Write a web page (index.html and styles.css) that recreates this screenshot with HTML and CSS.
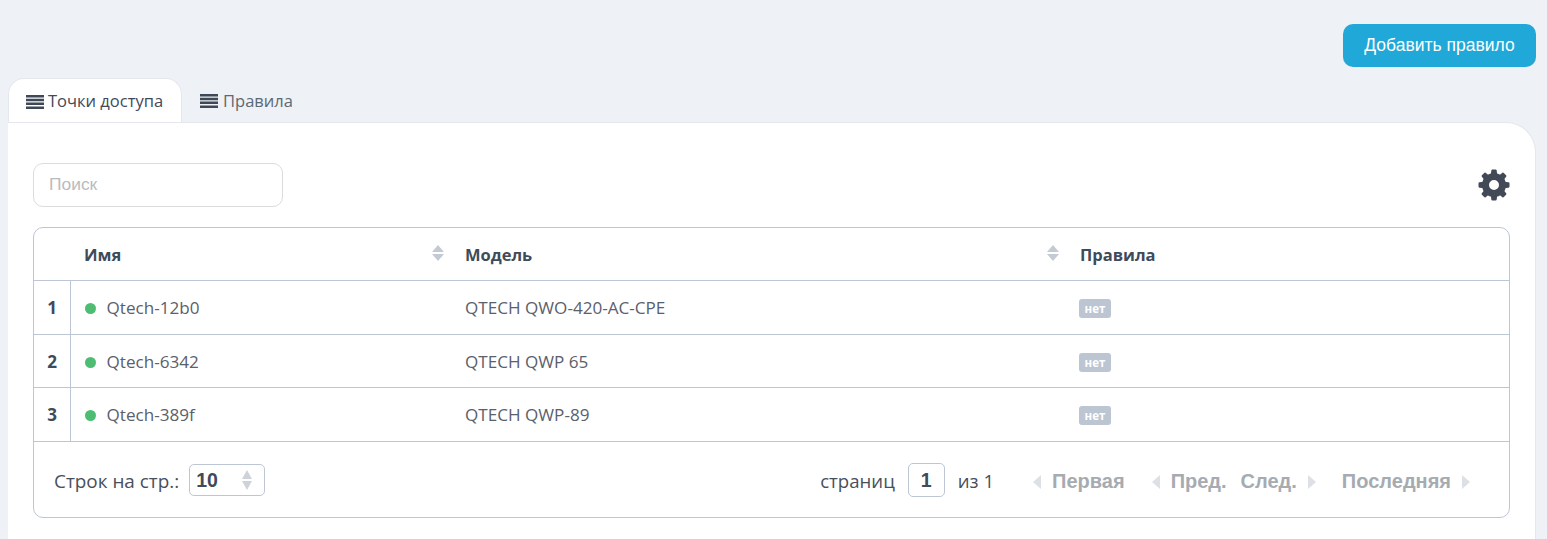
FILE: index.html
```html
<!DOCTYPE html>
<html lang="ru">
<head>
<meta charset="utf-8">
<title>Правила</title>
<link rel="stylesheet" href="styles.css">
</head>
<body>
<div class="toolbar"><button class="add-btn">Добавить правило</button></div>
<div class="tabs">
  <div class="tab active"><svg class="bars" viewBox="0 0 18 14"><path d="M0 0h18v2.5H0zM0 3.8h18v2.5H0zM0 7.6h18v2.5H0zM0 11.4h18V14H0z"/></svg>Точки доступа</div>
  <div class="tab"><svg class="bars" viewBox="0 0 18 14"><path d="M0 0h18v2.5H0zM0 3.8h18v2.5H0zM0 7.6h18v2.5H0zM0 11.4h18V14H0z"/></svg>Правила</div>
</div>
<main class="panel">
  <div class="filter-row">
    <input class="search" type="text" placeholder="Поиск">
    <svg class="gear" viewBox="0 0 32 32">
      <circle class="gear-ring" cx="16" cy="16" r="8.5"/>
      <g class="gear-teeth">
        <path d="M12.8 6 13.3 1.5Q13.4.5 14.4.5h3.2q1 0 1.1 1L19.2 6z"/>
        <path d="M12.8 6 13.3 1.5Q13.4.5 14.4.5h3.2q1 0 1.1 1L19.2 6z" transform="rotate(45 16 16)"/>
        <path d="M12.8 6 13.3 1.5Q13.4.5 14.4.5h3.2q1 0 1.1 1L19.2 6z" transform="rotate(90 16 16)"/>
        <path d="M12.8 6 13.3 1.5Q13.4.5 14.4.5h3.2q1 0 1.1 1L19.2 6z" transform="rotate(135 16 16)"/>
        <path d="M12.8 6 13.3 1.5Q13.4.5 14.4.5h3.2q1 0 1.1 1L19.2 6z" transform="rotate(180 16 16)"/>
        <path d="M12.8 6 13.3 1.5Q13.4.5 14.4.5h3.2q1 0 1.1 1L19.2 6z" transform="rotate(225 16 16)"/>
        <path d="M12.8 6 13.3 1.5Q13.4.5 14.4.5h3.2q1 0 1.1 1L19.2 6z" transform="rotate(270 16 16)"/>
        <path d="M12.8 6 13.3 1.5Q13.4.5 14.4.5h3.2q1 0 1.1 1L19.2 6z" transform="rotate(315 16 16)"/>
      </g>
    </svg>
  </div>
  <div class="table-box">
    <table class="grid">
      <thead>
        <tr>
          <th class="col-idx"></th>
          <th class="col-name"><span class="th-label">Имя</span><span class="sort"><i class="up"></i><i class="down"></i></span></th>
          <th class="col-model"><span class="th-label">Модель</span><span class="sort"><i class="up"></i><i class="down"></i></span></th>
          <th class="col-rules"><span class="th-label">Правила</span></th>
        </tr>
      </thead>
      <tbody>
        <tr><td class="idx">1</td><td><span class="dot"></span>Qtech-12b0</td><td>QTECH QWO-420-AC-CPE</td><td><span class="badge">нет</span></td></tr>
        <tr><td class="idx">2</td><td><span class="dot"></span>Qtech-6342</td><td>QTECH QWP 65</td><td><span class="badge">нет</span></td></tr>
        <tr><td class="idx">3</td><td><span class="dot"></span>Qtech-389f</td><td>QTECH QWP-89</td><td><span class="badge">нет</span></td></tr>
      </tbody>
    </table>
    <div class="pager">
      <div class="per-page">
        <span class="pager-label">Строк на стр.:</span>
        <div class="select"><b>10</b><span class="sort small"><i class="up"></i><i class="down"></i></span></div>
      </div>
      <div class="pages">
        <span class="pager-label">страниц</span>
        <div class="page-input">1</div>
        <span class="pager-label">из 1</span>
        <span class="nav nav-first"><i class="left"></i>Первая</span>
        <span class="nav nav-prev"><i class="left"></i>Пред.</span>
        <span class="nav nav-next">След.<i class="right"></i></span>
        <span class="nav nav-last">Последняя<i class="right"></i></span>
      </div>
    </div>
  </div>
</main>
</body>
</html>
```

FILE: styles.css
```css
* { box-sizing: border-box; }
html, body { height: 100%; }
body {
  margin: 0;
  height: 539px;
  overflow: hidden;
  padding: 24px 11px 0 8px;
  background: #eef1f6;
  color: #484f5c;
  font: 17.1px/1.5 "Open Sans", sans-serif;
}
.toolbar { display: flex; justify-content: flex-end; height: 54px; }
.add-btn {
  width: 193px;
  height: 43px;
  border: 0;
  border-radius: 10px;
  background: #20a8d8;
  color: #fff;
  font: 17.5px "Liberation Sans", sans-serif;
}
.tabs { display: flex; height: 44px; }
.tab {
  display: flex;
  align-items: center;
  padding: 2px 18px 0 17px;
  color: #5c6873;
  font-size: 16.5px;
  white-space: nowrap;
}
.tab.active {
  background: #fff;
  border-radius: 16px 16px 0 0;
  border: 1px solid #e4e7ed;
  border-bottom: 0;
  color: #3f4a5a;
}
.bars { width: 18px; height: 14px; margin-right: 4px; fill: #3f4856; }
.tab:not(.active) .bars { margin-left: 1px; margin-right: 5px; }
.panel {
  height: 420px;
  padding: 40px 25px 0;
  background: #fff;
  border: 1px solid #e4e7ed;
  border-bottom: 0;
  border-left: 0;
  border-radius: 0 30px 0 0;
}
.filter-row { display: flex; justify-content: space-between; align-items: center; height: 44px; }
.search {
  width: 250px;
  height: 44px;
  padding: 0 15px 2px;
  border: 1px solid #dcdcdc;
  border-radius: 10px;
  font: 17.4px "Liberation Sans", sans-serif;
  outline: 0;
}
.search::placeholder { color: #b9bbbe; }
.gear { width: 32px; height: 32px; margin-top: -1px; }
.gear-ring { fill: none; stroke: #434a57; stroke-width: 7; }
.gear-teeth { fill: #434a57; }
.table-box {
  margin-top: 20px;
  width: 1477px;
  height: 291px;
  border: 1px solid #bdc6d4;
  border-radius: 10px;
}
.grid { width: 100%; border-collapse: collapse; table-layout: fixed; }
.grid th {
  height: 52px;
  position: relative;
  padding: 3px 14px 0;
  text-align: left;
  font-size: 16.5px;
  font-weight: 700;
  color: #3f4a5a;
  border-bottom: 1px solid #bdc6d4;
}
.col-idx { width: 36px; }
.col-name { width: 381px; }
.col-model { width: 615px; }
.grid td {
  height: 53px;
  padding: 2px 14px 0;
  color: #5a606c;
  border-bottom: 1px solid #bdc6d4;
}
.grid tbody tr:nth-child(odd) td { height: 54px; }
.grid td.idx {
  padding: 2px 0 0 1px;
  text-align: center;
  font-weight: 700;
  color: #3f4a5a;
  border-right: 1px solid #bdc6d4;
}
.dot {
  display: inline-block;
  width: 11px;
  height: 11px;
  margin-right: 11px;
  border-radius: 50%;
  background: #4dbd74;
}
.badge {
  display: inline-block;
  width: 32px;
  height: 19px;
  margin-left: -1px;
  border-radius: 3px;
  background: #bcc5d2;
  color: #fff;
  font: 700 11.5px/19px "Open Sans", sans-serif;
  text-align: center;
  vertical-align: 1px;
}
.sort { display: flex; flex-direction: column; gap: 2px; position: absolute; right: 7px; top: 17px; }
.sort i { display: block; width: 0; height: 0; border-left: 6px solid transparent; border-right: 6px solid transparent; }
.sort .up { border-bottom: 7px solid #c3cad4; }
.sort .down { border-top: 7px solid #c3cad4; }
.pager {
  display: flex;
  justify-content: space-between;
  align-items: center;
  height: 76px;
  padding: 0 0 0 20px;
  font-size: 18.6px;
}
.per-page, .pages { display: flex; align-items: center; }
.per-page { font-size: 18.9px; }
.pager-label { margin-top: 3px; }
.select {
  position: relative;
  width: 76px;
  height: 32px;
  margin-left: 10px;
  padding-left: 6px;
  border: 1px solid #bdc6d4;
  border-radius: 5px;
  font: 700 19.5px/31px "Liberation Sans", sans-serif;
  color: #3f4a5a;
}
.sort.small { right: 12px; top: 5px; }
.sort.small i { border-left-width: 5.5px; border-right-width: 5.5px; }
.sort.small .up { border-bottom: 9px solid #cfd3d9; }
.sort.small .down { border-top: 9px solid #cfd3d9; }
.pages { padding-right: 39px; }
.page-input {
  width: 37px;
  height: 34px;
  margin: 0 13px;
  border: 1px solid #bdc6d4;
  border-radius: 5px;
  text-align: center;
  font: 700 19.5px/32px "Liberation Sans", sans-serif;
  color: #3f4a5a;
}
.nav {
  display: flex;
  align-items: center;
  margin-top: 4px;
  color: #a6abb2;
  font: 700 20px "Liberation Sans", sans-serif;
}
.nav i { display: block; width: 0; height: 0; border-top: 7px solid transparent; border-bottom: 7px solid transparent; }
.nav .left { border-right: 8px solid #dde0e4; margin-right: 11px; }
.nav .right { border-left: 8px solid #dde0e4; margin-left: 11px; }
.nav-first { margin-left: 39px; }
.nav-prev { margin-left: 27px; }
.nav-next { margin-left: 14px; }
.nav-last { margin-left: 26px; }
```
